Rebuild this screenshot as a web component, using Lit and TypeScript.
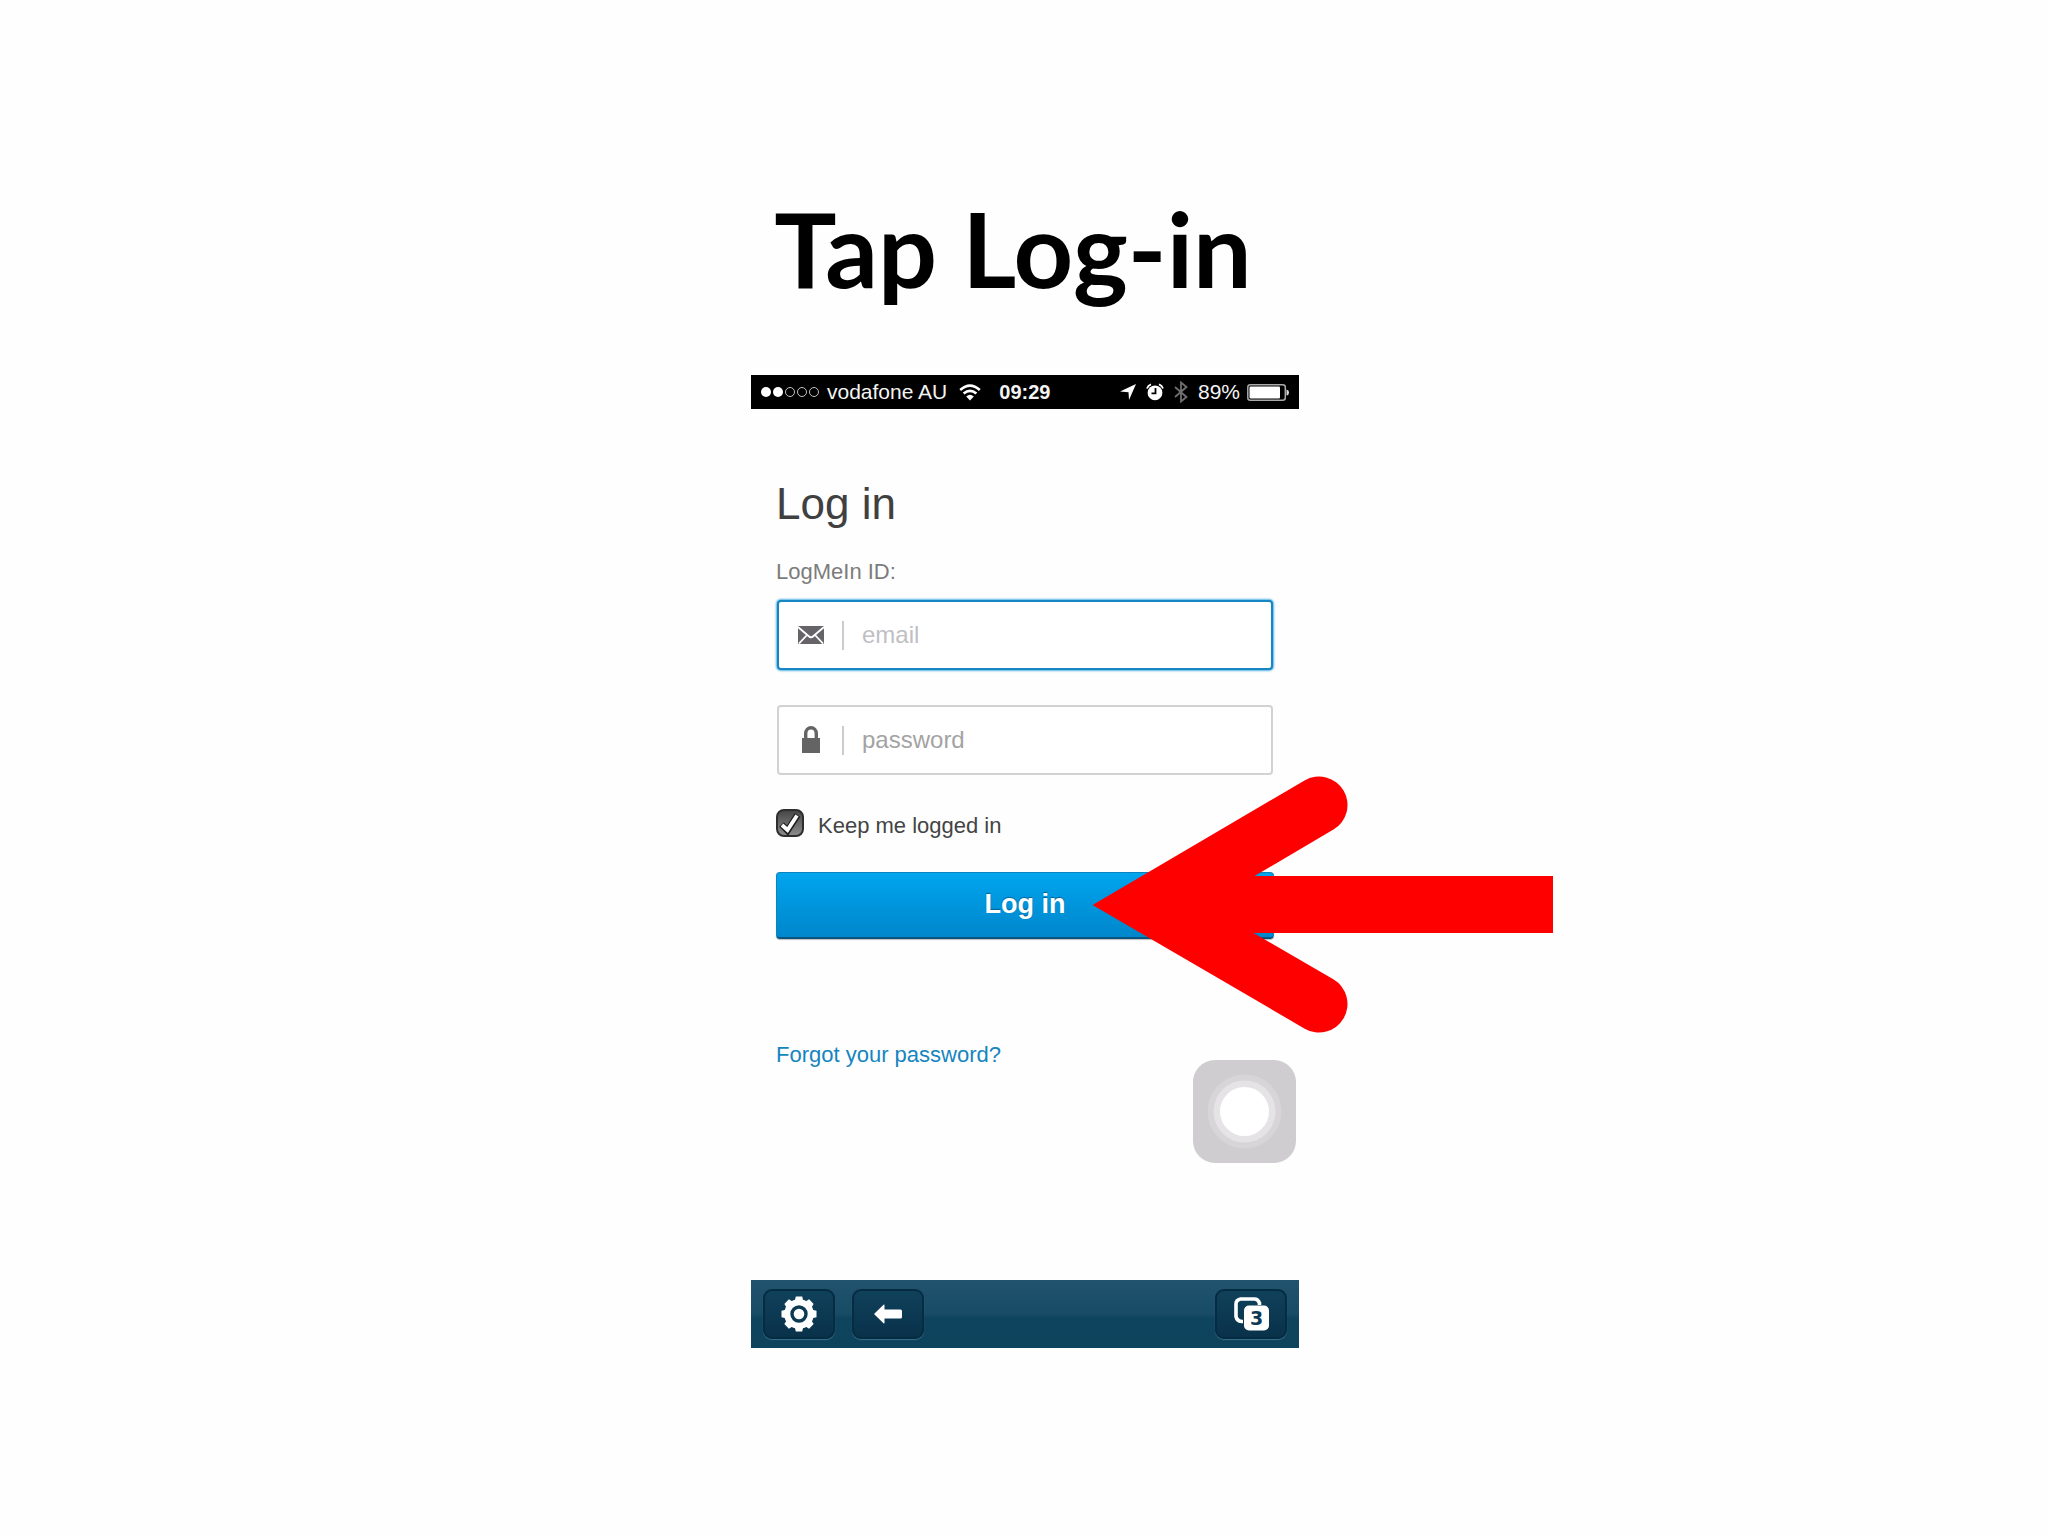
import { LitElement, html, css } from "lit";
import { customElement, state } from "lit/decorators.js";

@customElement("status-bar")
class StatusBar extends LitElement {
  static styles = css`
    :host { display: block; }
    .bar {
      display: flex; align-items: center; justify-content: space-between;
      height: 34px; padding: 0 10px; background: #000; color: #f4f4f4;
      font: 21px/34px "Liberation Sans", Arial, sans-serif;
    }
    .side { display: flex; align-items: center; }
    .signal { margin-right: 7px; }
    .wifi { margin: 0 18px 0 12px; }
    .time { font-size: 20px; font-weight: 700; }
    .right { gap: 10px; }
    .battery { margin-left: -3px; }
    svg { display: block; }
  `;
  render() {
    return html`
      <div class="bar">
        <div class="side">
          <svg class="signal" width="59" height="12" viewBox="0 0 59 12" aria-hidden="true">
            <g fill="#fff"><circle cx="5" cy="6" r="5"/><circle cx="17" cy="6" r="5"/></g>
            <g fill="none" stroke="#c4c4c4"><circle cx="29" cy="6" r="4.5"/><circle cx="41" cy="6" r="4.5"/><circle cx="53" cy="6" r="4.5"/></g>
          </svg>
          <span>vodafone AU</span>
          <svg class="wifi" width="22" height="17" viewBox="0 0 22 17" fill="none" stroke="#fff" stroke-width="2.6" aria-hidden="true">
            <path d="M1.2 6Q11-2.6 20.8 6M4.6 9.6Q11 4 17.4 9.600"/>
            <path d="M7.2 12.400Q11 9 14.800 12.400L11 16.500Z" fill="#fff" stroke="none"/>
          </svg>
          <span class="time">09:29</span>
        </div>
        <div class="side right">
          <svg width="16" height="16" viewBox="0 0 16 16" fill="#fff" aria-hidden="true"><path d="M16 0L9 16L8.500 8.200L0 7.500Z"/></svg>
          <svg width="18" height="18" viewBox="0 0 18 18" aria-hidden="true">
            <circle cx="9" cy="9.800" r="7.400" fill="#fff"/>
            <path d="M9.500 5V10.400H5.500" fill="none" stroke="#000" stroke-width="1.800"/>
            <path d="M1 5.500Q2 2.500 5 1.400M17 5.500Q16 2.500 13 1.400" fill="none" stroke="#fff" stroke-width="1.800"/>
          </svg>
          <svg width="14" height="22" viewBox="0 0 14 22" fill="none" stroke="#707070" stroke-width="1.800" aria-hidden="true"><path d="M1 6L12.500 16L7 20.500V1.500L12.500 6L1 16"/></svg>
          <span>89%</span>
          <svg class="battery" width="42" height="17" viewBox="0 0 42 17" aria-hidden="true">
            <rect x=".8" y=".8" width="37.500" height="15.400" rx="2.500" fill="#000" stroke="#aaa" stroke-width="1.500"/>
            <rect x="2.500" y="2.500" width="30.500" height="12" rx="1" fill="#fff"/>
            <path d="M39.500 5.500Q42 6 42 8.500T39.500 11.500Z" fill="#ddd"/>
          </svg>
        </div>
      </div>`;
  }
}

@customElement("login-form")
class LoginForm extends LitElement {
  @state() private keep = true;

  static styles = css`
    :host { display: block; font: 22px/26px "Liberation Sans", Arial, sans-serif; color: #444; }
    .form { display: flex; flex-direction: column; padding: 69px 25px 212px; }
    h2 { margin: 0 0 29px; font-size: 44px; line-height: 52px; font-weight: 400; color: #404040; }
    .label { margin-bottom: 14px; color: #7c7c7c; }
    .field {
      display: flex; align-items: center; box-sizing: border-box; height: 70px;
      margin: 1px 1px 34px; border: 2px solid #d2d2d2; border-radius: 4px; background: #fff;
    }
    .field.active { border-color: #1687c4; box-shadow: 0 0 2px 1px #58b4e2; }
    .icon { display: grid; place-items: center; width: 63px; height: 29px; border-right: 2px solid #ccc; }
    .field svg { display: block; }
    .field input {
      flex: 1; min-width: 0; height: 60px; padding: 0 18px; border: 0; outline: 0;
      background: none; font: 24px "Liberation Sans", Arial, sans-serif; color: #444;
    }
    input::placeholder { color: #a3a3a3; opacity: 1; }
    .active input::placeholder { color: #c0bfc4; }
    .keep { display: flex; align-items: flex-start; gap: 14px; margin-bottom: 29px; line-height: 34px; }
    .box { display: grid; width: 28px; height: 28px; }
    .box > * { grid-area: 1 / 1; }
    .box input {
      appearance: none; margin: 0; box-sizing: border-box; border: 2px solid #2e2e2e; border-radius: 8px;
      background: linear-gradient(#484848, #8a8a8a);
    }
    .box svg { pointer-events: none; }
    .action { position: relative; }
    .submit {
      display: block; width: 100%; height: 67px; padding: 0 0 2px; border: 1px solid #0b83bd;
      border-bottom: 2px solid #075580; border-radius: 4px; box-shadow: 0 1px 1px #bbb;
      background: linear-gradient(#00a5ee, #0086cb); color: #fff;
      font: 700 27px "Liberation Sans", Arial, sans-serif; text-shadow: 0 -1px 1px #00609a;
    }
    .pointer { position: absolute; left: 316px; top: -96px; pointer-events: none; }
    a { align-self: flex-start; margin-top: 103px; color: #1585c0; text-decoration: none; }
  `;
  render() {
    return html`
      <form class="form" @submit=${(e: Event) => e.preventDefault()}>
        <h2>Log in</h2>
        <label class="label" for="email">LogMeIn ID:</label>
        <div class="field active">
          <span class="icon">
            <svg width="26" height="18" viewBox="0 0 26 18" aria-hidden="true">
              <rect width="26" height="18" rx="1" fill="#666468"/>
              <path d="M0 1L10.500 10Q13 12.500 15.500 10L26 1M1 17.500L9 9M25 17.500L17 9" fill="none" stroke="#fff" stroke-width="1.800"/>
            </svg>
          </span>
          <input id="email" type="email" placeholder="email" />
        </div>
        <div class="field">
          <span class="icon">
            <svg width="18" height="29" viewBox="0 0 18 29" aria-hidden="true">
              <rect y="12" width="18" height="15" fill="#646464"/>
              <path d="M3.700 13V7.500A5.300 5.800 0 0 1 14.300 7.500V13" fill="none" stroke="#646464" stroke-width="3.400"/>
            </svg>
          </span>
          <input type="password" placeholder="password" aria-label="password" />
        </div>
        <div class="keep">
          <span class="box">
            <input id="keep" type="checkbox" .checked=${this.keep}
              @change=${(e: Event) => { this.keep = (e.target as HTMLInputElement).checked; }} />
            ${this.keep ? html`<svg width="28" height="28" viewBox="0 0 28 28" fill="none" aria-hidden="true">
              <path d="M5.500 15.500L11.500 21.500L21.500 6" stroke="#1c1c1c" stroke-width="6.500"/>
              <path d="M6 16L11.500 21L21 6.500" stroke="#fff" stroke-width="3.800"/>
            </svg>` : ""}
          </span>
          <label for="keep">Keep me logged in</label>
        </div>
        <div class="action">
          <button class="submit" type="submit">Log in</button>
          <svg class="pointer" width="461" height="258" viewBox="0 0 461 258" fill="none" stroke="#f00" stroke-width="57" aria-hidden="true">
            <path d="M227 29L57 129L227 228" stroke-linecap="round" stroke-linejoin="miter"/>
            <path d="M70 128.500H461"/>
          </svg>
        </div>
        <a href="#">Forgot your password?</a>
      </form>`;
  }
}

@customElement("tool-bar")
class ToolBar extends LitElement {
  static styles = css`
    :host { display: block; }
    .bar {
      display: flex; gap: 17px; align-items: center; height: 68px; padding: 0 12px;
      background: linear-gradient(#22536e, #174b66 50%, #0f445e 56%, #0e435c);
    }
    button {
      display: grid; place-items: center; width: 72px; height: 50px; padding: 0;
      border: 2px solid #062c42; border-radius: 9px; box-shadow: 0 1px 1px #3d708a;
      background: linear-gradient(#10415b, #09314a);
    }
    .tabs { margin-left: auto; }
    svg { display: block; }
    text { font: 700 19px "DejaVu Sans", sans-serif; }
  `;
  render() {
    const teeth = [0, 45, 90, 135, 180, 225, 270, 315];
    return html`
      <nav class="bar">
        <button type="button" aria-label="Settings">
          <svg width="36" height="36" viewBox="-18 -18 36 36" aria-hidden="true">
            <circle r="14.800" fill="#fff"/>
            <path d="${teeth.map((a) => {
              const t = (a * Math.PI) / 180;
              const p = (r: number, d: number) => `${r * Math.cos(t) - d * Math.sin(t)} ${r * Math.sin(t) + d * Math.cos(t)}`;
              return `M${p(12, -4.5)}L${p(17.5, -3.2)}L${p(17.5, 3.2)}L${p(12, 4.5)}Z`;
            }).join("")}" fill="#fff"/>
            <circle r="7" fill="#fff" stroke="#0c3a53" stroke-width="3.400"/>
          </svg>
        </button>
        <button type="button" aria-label="Back">
          <svg width="28" height="20" viewBox="0 0 28 20" fill="#fff" aria-hidden="true"><path d="M0 10L9.500 .8Q10.500 0 10.500 1.500V5.500H26.500Q28 5.500 28 7V13Q28 14.500 26.500 14.500H10.500V18.500Q10.500 20 9.500 19.200Z"/></svg>
        </button>
        <button class="tabs" type="button" aria-label="Tabs">
          <svg width="35" height="34" viewBox="0 0 35 34" aria-hidden="true">
            <path d="M25.500 8V6Q24 2 20.500 2H6.500Q2 3 2 7V19.500Q3 24 7.500 24.500H9" fill="none" stroke="#fff" stroke-width="3.600"/>
            <rect x="10" y="8.500" width="25" height="25" rx="5" fill="#fff"/>
            <text x="22.500" y="28" text-anchor="middle" fill="#0c3a53">3</text>
          </svg>
        </button>
      </nav>`;
  }
}

@customElement("app-root")
class AppRoot extends LitElement {
  static styles = css`
    :host { display: block; min-height: 100vh; background: #fefefe; }
    .slide { display: flex; flex-direction: column; align-items: center; padding: 188px 0 48px 2px; }
    h1 {
      margin: 0 0 67px; padding-right: 24px; color: #000;
      font: 700 104px/120px Lato, "Open Sans", sans-serif;
    }
    .phone { position: relative; width: 548px; max-width: 100%; }
    .assist { position: absolute; right: 3px; bottom: 185px; padding: 0; border: 0; background: none; }
    .assist svg { display: block; }
  `;
  render() {
    return html`
      <main class="slide">
        <h1>Tap Log-in</h1>
        <section class="phone">
          <status-bar></status-bar>
          <login-form></login-form>
          <tool-bar></tool-bar>
          <button class="assist" type="button" aria-label="AssistiveTouch">
            <svg width="103" height="103" viewBox="0 0 103 103" aria-hidden="true">
              <rect width="103" height="103" rx="22" fill="#cfcdd0"/>
              <circle cx="51.500" cy="51.500" r="37" fill="#d7d5d8"/>
              <circle cx="51.500" cy="51.500" r="31" fill="#e5e3e6"/>
              <circle cx="51.500" cy="51.500" r="24.500" fill="#fff"/>
            </svg>
          </button>
        </section>
      </main>`;
  }
}
